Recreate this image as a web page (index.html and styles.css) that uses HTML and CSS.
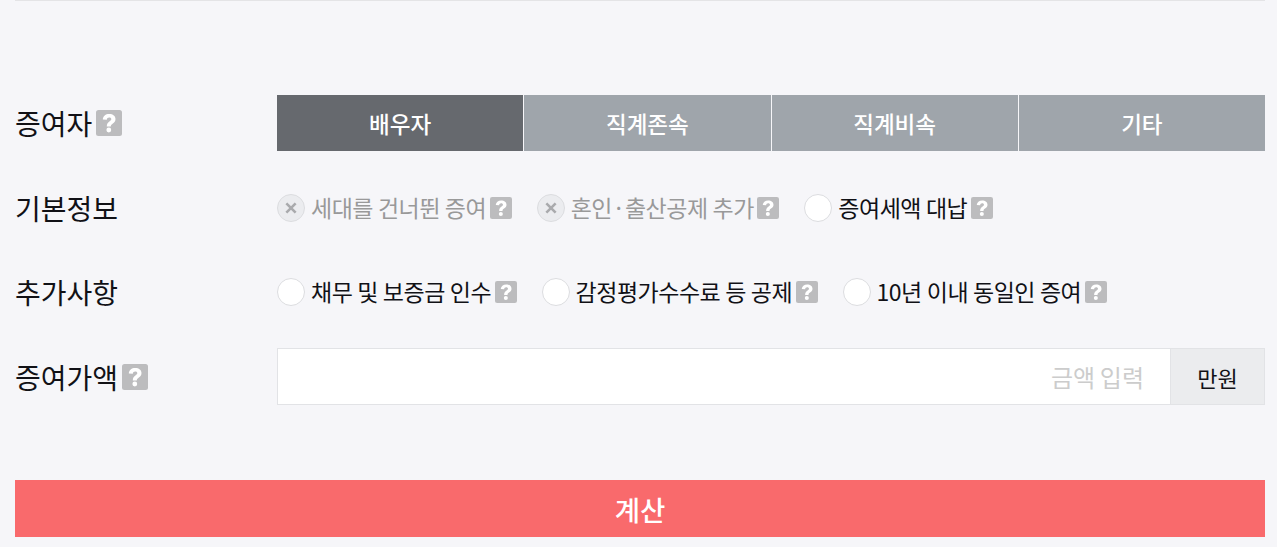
FILE: index.html
```html
<!DOCTYPE html>
<html lang="ko">
<head>
<meta charset="utf-8">
<title>증여세 계산</title>
<link rel="stylesheet" href="styles.css">
</head>
<body>
<main class="calc">
  <div class="row row-donor">
    <div class="label">증여자<span class="help"><svg viewBox="0 0 26 26"><use href="#q"/></svg></span></div>
    <div class="tabs">
      <button class="tab active">배우자</button>
      <button class="tab">직계존속</button>
      <button class="tab">직계비속</button>
      <button class="tab">기타</button>
    </div>
  </div>
  <div class="row row-basic">
    <div class="label">기본정보</div>
    <div class="opts">
      <label class="opt off"><span class="radio"><svg viewBox="0 0 28 28"><path d="M9 9l10 10M19 9l-10 10"/></svg></span><span class="txt">세대를 건너뛴 증여</span><span class="help small"><svg viewBox="0 0 26 26"><use href="#q"/></svg></span></label>
      <label class="opt off"><span class="radio"><svg viewBox="0 0 28 28"><path d="M9 9l10 10M19 9l-10 10"/></svg></span><span class="txt">혼인<span class="dot">·</span>출산공제 추가</span><span class="help small"><svg viewBox="0 0 26 26"><use href="#q"/></svg></span></label>
      <label class="opt"><span class="radio"></span><span class="txt">증여세액 대납</span><span class="help small"><svg viewBox="0 0 26 26"><use href="#q"/></svg></span></label>
    </div>
  </div>
  <div class="row row-extra">
    <div class="label">추가사항</div>
    <div class="opts">
      <label class="opt"><span class="radio"></span><span class="txt">채무 및 보증금 인수</span><span class="help small"><svg viewBox="0 0 26 26"><use href="#q"/></svg></span></label>
      <label class="opt"><span class="radio"></span><span class="txt">감정평가수수료 등 공제</span><span class="help small"><svg viewBox="0 0 26 26"><use href="#q"/></svg></span></label>
      <label class="opt"><span class="radio"></span><span class="txt">10년 이내 동일인 증여</span><span class="help small"><svg viewBox="0 0 26 26"><use href="#q"/></svg></span></label>
    </div>
  </div>
  <div class="row row-amount">
    <div class="label">증여가액<span class="help"><svg viewBox="0 0 26 26"><use href="#q"/></svg></span></div>
    <div class="amount">
      <div class="field">금액 입력</div>
      <div class="unit">만원</div>
    </div>
  </div>
  <button class="submit">계산</button>
</main>
<svg class="defs" width="0" height="0">
  <symbol id="q" viewBox="0 0 26 26">
    <rect width="26" height="26" rx="2.500" fill="#bcbcbe"/>
    <path d="M6.800 9.600C7 6 9.600 4 13.200 4c3.800 0 6.300 2 6.300 5.100 0 2.200-1.100 3.400-2.900 4.600-1.400.9-1.800 1.500-1.800 2.800h-4c0-2.700.8-3.900 2.600-5.100 1.300-.9 1.900-1.400 1.900-2.200 0-1-.8-1.700-2.100-1.700-1.400 0-2.200.8-2.400 2.300z" fill="#fff"/>
    <circle cx="12.800" cy="20" r="2.400" fill="#fff"/>
  </symbol>
</svg>
</body>
</html>
```
FILE: styles.css
```css
* { box-sizing: border-box; }
html, body { margin: 0; height: 100%; }
body {
  background: #f6f6f9;
  font-family: "Noto Sans CJK KR", "Noto Sans", sans-serif;
  color: #111116;
  overflow: hidden;
}
.calc {
  margin: 0 12px 0 15px;
  border-top: 1px solid #e4e4e6;
  padding-top: 94px;
}
.row { display: flex; align-items: center; }
.row-donor { height: 56px; }
.row-basic { height: 28px; margin-top: 43px; }
.row-extra { height: 28px; margin-top: 56px; }
.row-amount { height: 57px; margin-top: 42px; }
.label {
  width: 262px;
  flex: none;
  display: flex;
  align-items: center;
  font-size: 28px;
  line-height: 40px;
}
.help { display: inline-flex; width: 26px; height: 26px; margin-left: 4px; }
.help svg { width: 100%; height: 100%; display: block; }
.help.small { width: 22px; height: 22px; margin-left: 3.500px; }
.tabs { flex: 1; display: flex; height: 56px; }
.tab {
  flex: 1;
  border: 0;
  border-right: 1px solid #f6f6f9;
  background: #9fa5ab;
  color: #fff;
  font: 500 22.500px "Noto Sans CJK KR", sans-serif;
  padding: 0;
}
.tab:last-child { border-right: 0; }
.tab.active { background: #66696e; }
.opts { display: flex; align-items: center; }
.opt {
  display: flex;
  align-items: center;
  margin-right: 25px;
  font-size: 23px;
  letter-spacing: -0.5px;
  word-spacing: -1px;
  line-height: 28px;
}
.txt { position: relative; top: -1px; }
.dot { padding: 0 3.500px; }
.radio {
  width: 28px;
  height: 28px;
  border-radius: 50%;
  border: 1px solid #dcdde0;
  background: #fff;
  margin-right: 6px;
  flex: none;
}
.radio svg { display: block; width: 26px; height: 26px; fill: none; stroke: #a9aaad; stroke-width: 2.8; }
.off .radio { background: #ebecef; }
.off .txt { color: #999; }
.amount { flex: 1; display: flex; height: 57px; border: 1px solid #e2e3e6; background: #fff; }
.field {
  flex: 1;
  display: flex;
  align-items: center;
  justify-content: flex-end;
  padding-right: 26px;
  color: #ccc;
  font-size: 24px;
  word-spacing: -2px;
}
.unit {
  width: 94px;
  display: flex;
  align-items: center;
  justify-content: center;
  background: #ebecee;
  border-left: 1px solid #e2e3e6;
  font-size: 22px;
}
.submit {
  display: block;
  width: 100%;
  height: 57px;
  margin-top: 75px;
  border: 0;
  background: #f96a6c;
  color: #fff;
  font: 500 27.500px "Noto Sans CJK KR", sans-serif;
  padding: 0;
}
.defs { position: absolute; }
```
